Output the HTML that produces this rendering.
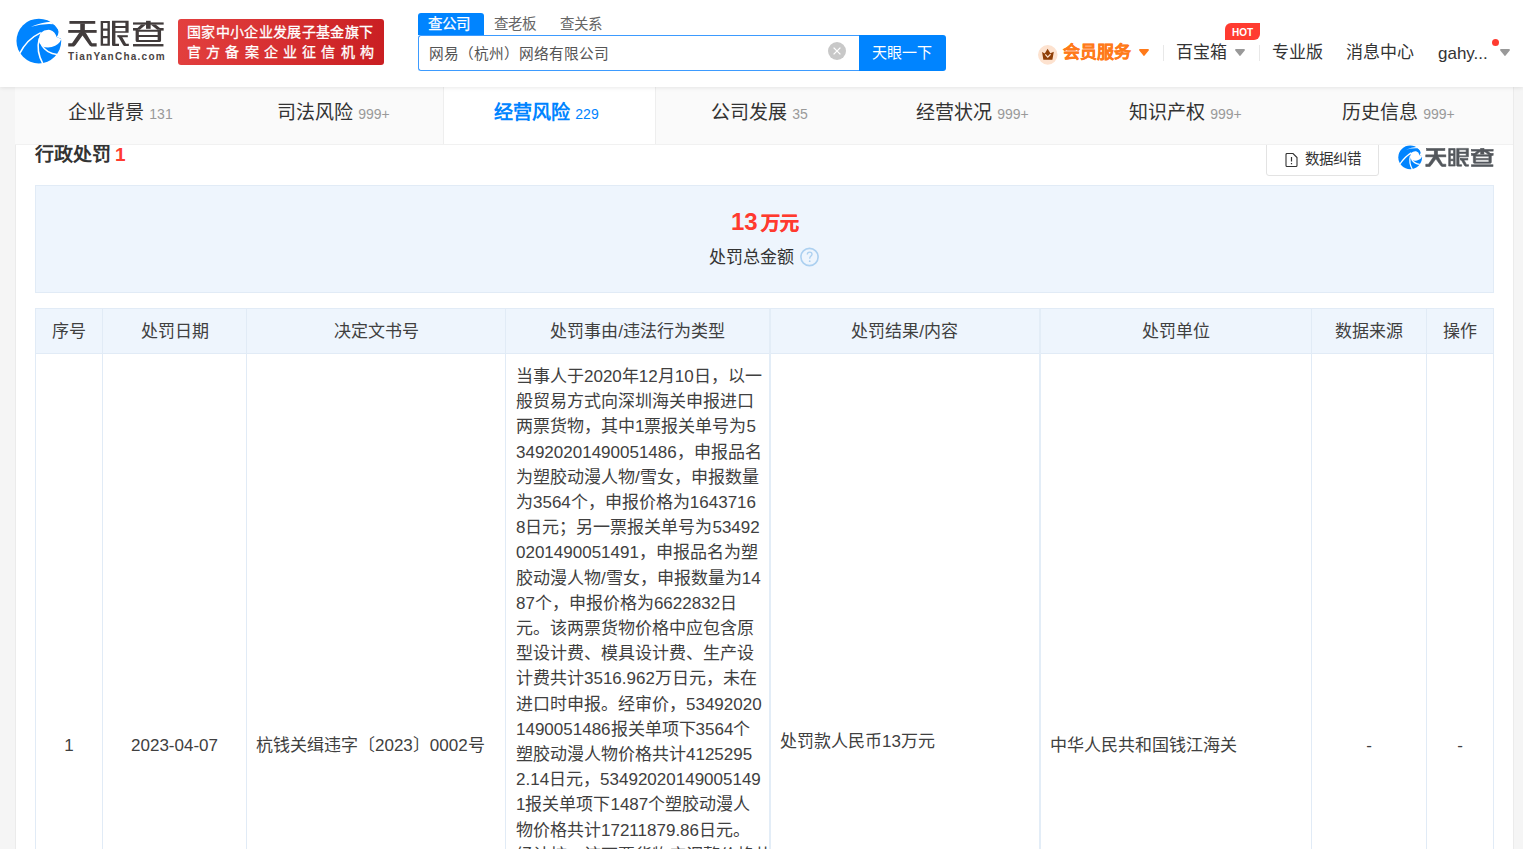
<!DOCTYPE html>
<html lang="zh-CN"><head><meta charset="utf-8">
<style>
*{margin:0;padding:0;box-sizing:border-box}
html,body{width:1523px;height:849px;overflow:hidden;background:#f5f5f5;font-family:"Liberation Sans",sans-serif;color:#333}
.abs{position:absolute;white-space:nowrap}
#hdr{position:absolute;left:0;top:0;width:1523px;height:87px;background:#fff;z-index:5;box-shadow:0 1px 4px rgba(0,0,0,.085)}
#card{position:absolute;left:15px;top:87px;width:1499px;height:762px;background:#fff;border-left:1px solid #ebebeb;border-right:1px solid #ebebeb}
#tabs{position:absolute;left:15px;top:87px;width:1498px;height:58px;background:#fafafa;border-bottom:1px solid #f1f1f1;z-index:4}
.tab{position:absolute;top:0;height:57px;width:214px;text-align:center;font-size:19px;line-height:52px;color:#333;padding-right:6px}
.tab span{font-size:14px;color:#999;margin-left:5px}
.tab.on{background:#fff;color:#0084ff;font-weight:bold;border-left:1px solid #eee;border-right:1px solid #eee}
.tab.on span{color:#0084ff;font-weight:normal}
.cell{position:absolute;white-space:nowrap;font-size:17px;color:#404040;line-height:25px}
</style></head><body>
<div id="hdr">
  <!-- logo swirl -->
  <svg class="abs" style="left:14px;top:16px" width="50" height="50" viewBox="0 0 849 849">
    <circle cx="422" cy="425" r="380" fill="#0084ff"/>
    <path d="M630,96 Q470,100 288,184 Q480,128 660,140 Z" fill="#fff"/>
    <path d="M610,80 L655,130 Q725,160 748,228 Q772,295 722,358 L815,390 L860,390 L860,40 Z" fill="#fff"/>
    <path d="M450,288 Q520,226 612,236 Q700,262 722,358 L805,390 Q770,490 640,528 Q540,545 480,512 Q430,470 420,432 Q425,340 450,288 Z" fill="#fff"/>
    <path d="M455,282 Q215,395 95,640" stroke="#fff" stroke-width="26" fill="none"/>
    <path d="M428,380 Q370,600 495,820" stroke="#fff" stroke-width="26" fill="none"/>
    <path d="M468,495 Q560,640 730,652" stroke="#fff" stroke-width="26" fill="none"/>
  </svg>
  <!-- logo text -->
  <svg class="abs" style="left:64px;top:16px" width="104" height="34" viewBox="0 0 2596 849" fill="#413b3b">
    <rect x="135" y="125" width="645" height="70"/>
    <rect x="105" y="350" width="710" height="70"/>
    <rect x="405" y="190" width="115" height="235"/>
    <path d="M380,418 L545,418 L700,680 L815,680 L815,760 L680,760 L640,735 L462,490 L290,722 L250,760 L105,760 L105,680 L200,680 Z"/>
    <path d="M915,125 H1145 V745 H915 Z M975,175 V310 H1085 V175 Z M975,370 V500 H1085 V370 Z M975,555 V695 H1085 V555 Z" fill-rule="evenodd"/>
    <g transform="translate(1148,0)">
      <path d="M50,120 H465 V420 H135 V695 H225 V750 H80 Q50,750 50,720 Z M135,170 V250 H385 V170 Z M135,300 V380 H385 V300 Z" fill-rule="evenodd"/>
      <rect x="185" y="480" width="260" height="50"/>
      <path d="M185,480 L290,500 L400,695 L470,695 L470,750 L360,750 L330,730 Z"/>
      <rect x="575" y="160" width="765" height="55"/>
      <rect x="900" y="120" width="115" height="200"/>
      <path d="M780,215 L900,215 L745,345 L640,345 Z"/>
      <path d="M1015,215 L1140,215 L1300,345 L1180,345 Z"/>
      <rect x="575" y="300" width="125" height="65"/>
      <rect x="1240" y="300" width="100" height="65"/>
      <path d="M640,345 H1275 V610 Q1275,650 1235,650 H680 Q640,650 640,610 Z M720,395 V475 H1190 V395 Z M720,525 V600 H1190 V525 Z" fill-rule="evenodd"/>
      <rect x="575" y="700" width="760" height="60"/>
    </g>
  </svg>
  <div class="abs" style="left:68px;top:51px;font-size:10px;font-weight:bold;color:#4a4444;letter-spacing:1.25px;line-height:12px">TianYanCha.com</div>
  <!-- red badge -->
  <div class="abs" style="left:178px;top:19px;width:206px;height:46px;border-radius:3px;background:linear-gradient(100deg,#e3403f,#c91e22)"></div>
  <div class="abs" style="left:187px;top:22px;font-size:14px;color:#fff;line-height:20px;letter-spacing:0.35px;-webkit-text-stroke:0.3px #fff">国家中小企业发展子基金旗下</div>
  <div class="abs" style="left:187px;top:42px;font-size:14px;color:#fff;line-height:20px;letter-spacing:5.2px;-webkit-text-stroke:0.3px #fff">官方备案企业征信机构</div>

  <!-- search -->
  <div class="abs" style="left:418px;top:13px;width:66px;height:22px;background:#0084ff;border-radius:3px 3px 0 0"></div>
  <div class="abs" style="left:428px;top:14px;font-size:14.5px;color:#fff;line-height:20px;-webkit-text-stroke:0.25px #fff">查公司</div>
  <div class="abs" style="left:494px;top:14px;font-size:14.5px;color:#666;line-height:20px">查老板</div>
  <div class="abs" style="left:560px;top:14px;font-size:14.5px;color:#666;line-height:20px">查关系</div>
  <div class="abs" style="left:418px;top:35px;width:442px;height:36px;border:1px solid #3d9bff;border-right:none;border-radius:3px 0 0 3px;background:#fff"></div>
  <div class="abs" style="left:428.5px;top:44px;font-size:14.7px;color:#555;line-height:20px">网易（杭州）网络有限公司</div>
  <svg class="abs" style="left:828px;top:42px" width="18" height="18" viewBox="0 0 18 18"><circle cx="9" cy="9" r="9" fill="#c8c8c8"/><path d="M5.6,5.6 L12.4,12.4 M12.4,5.6 L5.6,12.4" stroke="#fff" stroke-width="1.3"/></svg>
  <div class="abs" style="left:859px;top:35px;width:87px;height:36px;background:#0084ff;border-radius:0 3px 3px 0"></div>
  <div class="abs" style="left:872px;top:43px;font-size:15px;color:#fff;line-height:20px">天眼一下</div>

  <!-- nav -->
  <svg class="abs" style="left:1036px;top:43px" width="24" height="24" viewBox="0 0 849 849"><circle cx="417" cy="420" r="345" fill="#fde2cf"/><path d="M215,320 L310,370 L410,205 L510,365 L630,310 L580,595 L260,595 Z" fill="#8f3f08"/><path d="M330,405 L415,500 L515,400" stroke="#fde2cf" stroke-width="45" fill="none"/></svg>
  <div class="abs" style="left:1063px;top:41px;font-size:17px;font-weight:bold;color:#ff7a1a;line-height:24px;-webkit-text-stroke:0.3px #ff7a1a">会员服务</div>
  <svg class="abs" style="left:1139px;top:49px" width="10" height="7" viewBox="0 0 10 7"><path d="M0.9,0.9 H9.1 L5,6.1 Z" fill="#ff7a1a" stroke="#ff7a1a" stroke-width="1.6" stroke-linejoin="round"/></svg>
  <div class="abs" style="left:1163px;top:45px;width:1px;height:16px;background:#e8e8e8"></div>
  <div class="abs" style="left:1176px;top:41px;font-size:17px;color:#333;line-height:24px">百宝箱</div>
  <svg class="abs" style="left:1235px;top:49px" width="10" height="7" viewBox="0 0 10 7"><path d="M0.9,0.9 H9.1 L5,6.1 Z" fill="#999" stroke="#999" stroke-width="1.6" stroke-linejoin="round"/></svg>
  <div class="abs" style="left:1259px;top:45px;width:1px;height:16px;background:#e8e8e8"></div>
  <div class="abs" style="left:1225px;top:23px;width:35px;height:17px;background:#ff3b30;border-radius:6px 0 6px 0;color:#fff;font-size:10px;font-weight:bold;text-align:center;line-height:19px">HOT</div>
  <div class="abs" style="left:1272px;top:41px;font-size:17px;color:#333;line-height:24px">专业版</div>
  <div class="abs" style="left:1346px;top:41px;font-size:17px;color:#333;line-height:24px">消息中心</div>
  <div class="abs" style="left:1438px;top:42px;font-size:17px;color:#333;line-height:24px">gahy...</div>
  <div class="abs" style="left:1492px;top:39px;width:7px;height:7px;border-radius:50%;background:#ff3b30"></div>
  <svg class="abs" style="left:1500px;top:49px" width="10" height="7" viewBox="0 0 10 7"><path d="M0.9,0.9 H9.1 L5,6.1 Z" fill="#999" stroke="#999" stroke-width="1.6" stroke-linejoin="round"/></svg>
</div>

<div id="card"></div>
<div id="tabs">
  <div class="tab" style="left:2px;width:213px">企业背景<span>131</span></div>
  <div class="tab" style="left:215px;width:213px">司法风险<span>999+</span></div>
  <div class="tab on" style="left:428px;width:213px">经营风险<span>229</span></div>
  <div class="tab" style="left:641px;width:213px">公司发展<span>35</span></div>
  <div class="tab" style="left:854px;width:213px">经营状况<span>999+</span></div>
  <div class="tab" style="left:1067px;width:213px">知识产权<span>999+</span></div>
  <div class="tab" style="left:1280px;width:213px">历史信息<span>999+</span></div>
</div>

<div class="abs" style="left:35px;top:142px;font-size:19px;font-weight:bold;color:#333;line-height:26px">行政处罚<span style="color:#ff3b30;margin-left:4px">1</span></div>

<!-- data correction button + small logo -->
<div class="abs" style="left:1266px;top:138px;width:113px;height:38px;border:1px solid #e3e3e3;border-radius:3px;background:#fff"></div>
<svg class="abs" style="left:1285px;top:153px" width="13" height="14" viewBox="0 0 13 14"><path d="M1,1.5 Q1,0.5 2,0.5 H8 L12,4.5 V12.5 Q12,13.5 11,13.5 H2 Q1,13.5 1,12.5 Z" fill="none" stroke="#333" stroke-width="1.1"/><path d="M6.5,4 V8.5 M6.5,10 V11.2" stroke="#333" stroke-width="1.2"/></svg>
<div class="abs" style="left:1305px;top:149px;font-size:14.5px;color:#333;line-height:20px">数据纠错</div>
<svg class="abs" style="left:1396.7px;top:143.6px" width="26.5" height="26.5" viewBox="0 0 849 849">
  <circle cx="422" cy="425" r="380" fill="#0084ff"/>
  <path d="M630,96 Q470,100 288,184 Q480,128 660,140 Z" fill="#fff"/>
  <path d="M610,80 L655,130 Q725,160 748,228 Q772,295 722,358 L815,390 L860,390 L860,40 Z" fill="#fff"/>
  <path d="M450,288 Q520,226 612,236 Q700,262 722,358 L805,390 Q770,490 640,528 Q540,545 480,512 Q430,470 420,432 Q425,340 450,288 Z" fill="#fff"/>
  <path d="M455,285 Q250,410 95,640" stroke="#fff" stroke-width="40" fill="none"/>
  <path d="M428,380 Q370,600 495,820" stroke="#fff" stroke-width="40" fill="none"/>
  <path d="M468,495 Q560,640 730,652" stroke="#fff" stroke-width="40" fill="none"/>
</svg>
<svg class="abs" style="left:1422px;top:145px" width="75" height="24" viewBox="0 0 2596 849" fill="#53575c" stroke="#53575c" stroke-width="22">
    <rect x="135" y="125" width="645" height="70"/>
    <rect x="105" y="350" width="710" height="70"/>
    <rect x="405" y="190" width="115" height="235"/>
    <path d="M380,418 L545,418 L700,680 L815,680 L815,760 L680,760 L640,735 L462,490 L290,722 L250,760 L105,760 L105,680 L200,680 Z"/>
    <path d="M915,125 H1145 V745 H915 Z M975,175 V310 H1085 V175 Z M975,370 V500 H1085 V370 Z M975,555 V695 H1085 V555 Z" fill-rule="evenodd"/>
    <g transform="translate(1148,0)">
      <path d="M50,120 H465 V420 H135 V695 H225 V750 H80 Q50,750 50,720 Z M135,170 V250 H385 V170 Z M135,300 V380 H385 V300 Z" fill-rule="evenodd"/>
      <rect x="185" y="480" width="260" height="50"/>
      <path d="M185,480 L290,500 L400,695 L470,695 L470,750 L360,750 L330,730 Z"/>
      <rect x="575" y="160" width="765" height="55"/>
      <rect x="900" y="120" width="115" height="200"/>
      <path d="M780,215 L900,215 L745,345 L640,345 Z"/>
      <path d="M1015,215 L1140,215 L1300,345 L1180,345 Z"/>
      <rect x="575" y="300" width="125" height="65"/>
      <rect x="1240" y="300" width="100" height="65"/>
      <path d="M640,345 H1275 V610 Q1275,650 1235,650 H680 Q640,650 640,610 Z M720,395 V475 H1190 V395 Z M720,525 V600 H1190 V525 Z" fill-rule="evenodd"/>
      <rect x="575" y="700" width="760" height="60"/>
    </g>
</svg>

<!-- summary -->
<div class="abs" style="left:35px;top:185px;width:1459px;height:108px;background:#eef5fd;border:1px solid #e1ebf6"></div>
<div class="abs" style="left:731px;top:206px;font-size:24px;font-weight:bold;color:#ff3a2f;line-height:32px">13<span style="font-size:19px;margin-left:3px;-webkit-text-stroke:0.5px #ff3a2f">万元</span></div>
<div class="abs" style="left:709px;top:246px;font-size:17px;color:#333;line-height:24px">处罚总金额</div>
<svg class="abs" style="left:800px;top:247px" width="20" height="20" viewBox="0 0 20 20"><circle cx="9.5" cy="10" r="8.6" fill="none" stroke="#acd0f0" stroke-width="1.6"/><path d="M7.3,7.6 Q7.3,5.2 9.6,5.2 Q12,5.2 12,7.3 Q12,8.6 10.6,9.4 Q9.7,10 9.7,11.8" fill="none" stroke="#acd0f0" stroke-width="1.3"/><circle cx="9.7" cy="14.2" r="0.9" fill="#acd0f0"/></svg>

<!-- table -->
<div class="abs" style="left:35px;top:308px;width:1459px;height:600px;border:1px solid #e1ebf6;border-bottom:none"></div>
<div class="abs" style="left:36px;top:309px;width:1457px;height:44px;background:#eef5fd"></div>
<div class="abs" style="left:36px;top:353px;width:1457px;height:1px;background:#e1ebf6"></div>
<div class="abs" style="left:102px;top:309px;width:1px;height:600px;background:#e1ebf6"></div>
<div class="abs" style="left:246px;top:309px;width:1px;height:600px;background:#e1ebf6"></div>
<div class="abs" style="left:505px;top:309px;width:1px;height:600px;background:#e1ebf6"></div>
<div class="abs" style="left:769px;top:309px;width:2px;height:600px;background:#e3edf7"></div>
<div class="abs" style="left:1039px;top:309px;width:2px;height:600px;background:#e3edf7"></div>
<div class="abs" style="left:1311px;top:309px;width:1px;height:600px;background:#e1ebf6"></div>
<div class="abs" style="left:1426px;top:309px;width:1px;height:600px;background:#e1ebf6"></div>

<div class="cell" style="left:36px;width:66px;top:319px;text-align:center">序号</div>
<div class="cell" style="left:103px;width:143px;top:319px;text-align:center">处罚日期</div>
<div class="cell" style="left:247px;width:258px;top:319px;text-align:center">决定文书号</div>
<div class="cell" style="left:506px;width:263px;top:319px;text-align:center">处罚事由/违法行为类型</div>
<div class="cell" style="left:770px;width:269px;top:319px;text-align:center">处罚结果/内容</div>
<div class="cell" style="left:1040px;width:271px;top:319px;text-align:center">处罚单位</div>
<div class="cell" style="left:1312px;width:114px;top:319px;text-align:center">数据来源</div>
<div class="cell" style="left:1427px;width:66px;top:319px;text-align:center">操作</div>

<div class="cell" style="left:36px;width:66px;top:733px;text-align:center">1</div>
<div class="cell" style="left:103px;width:143px;top:733px;text-align:center">2023-04-07</div>
<div class="cell" style="left:256px;top:733px">杭钱关缉违字〔2023〕0002号</div>
<div class="cell" style="left:516px;top:364px;line-height:25.2px">当事人于2020年12月10日，以一<br>般贸易方式向深圳海关申报进口<br>两票货物，其中1票报关单号为5<br>34920201490051486，申报品名<br>为塑胶动漫人物/雪女，申报数量<br>为3564个，申报价格为1643716<br>8日元；另一票报关单号为53492<br>0201490051491，申报品名为塑<br>胶动漫人物/雪女，申报数量为14<br>87个，申报价格为6622832日<br>元。该两票货物价格中应包含原<br>型设计费、模具设计费、生产设<br>计费共计3516.962万日元，未在<br>进口时申报。经审价，53492020<br>1490051486报关单项下3564个<br>塑胶动漫人物价格共计4125295<br>2.14日元，53492020149005149<br>1报关单项下1487个塑胶动漫人<br>物价格共计17211879.86日元。<br>经计核，该两票货物应调整价格共</div>
<div class="cell" style="left:780px;top:729px">处罚款人民币13万元</div>
<div class="cell" style="left:1050px;top:733px">中华人民共和国钱江海关</div>
<div class="cell" style="left:1312px;width:114px;top:733px;text-align:center">-</div>
<div class="cell" style="left:1427px;width:66px;top:733px;text-align:center">-</div>
</body></html>
